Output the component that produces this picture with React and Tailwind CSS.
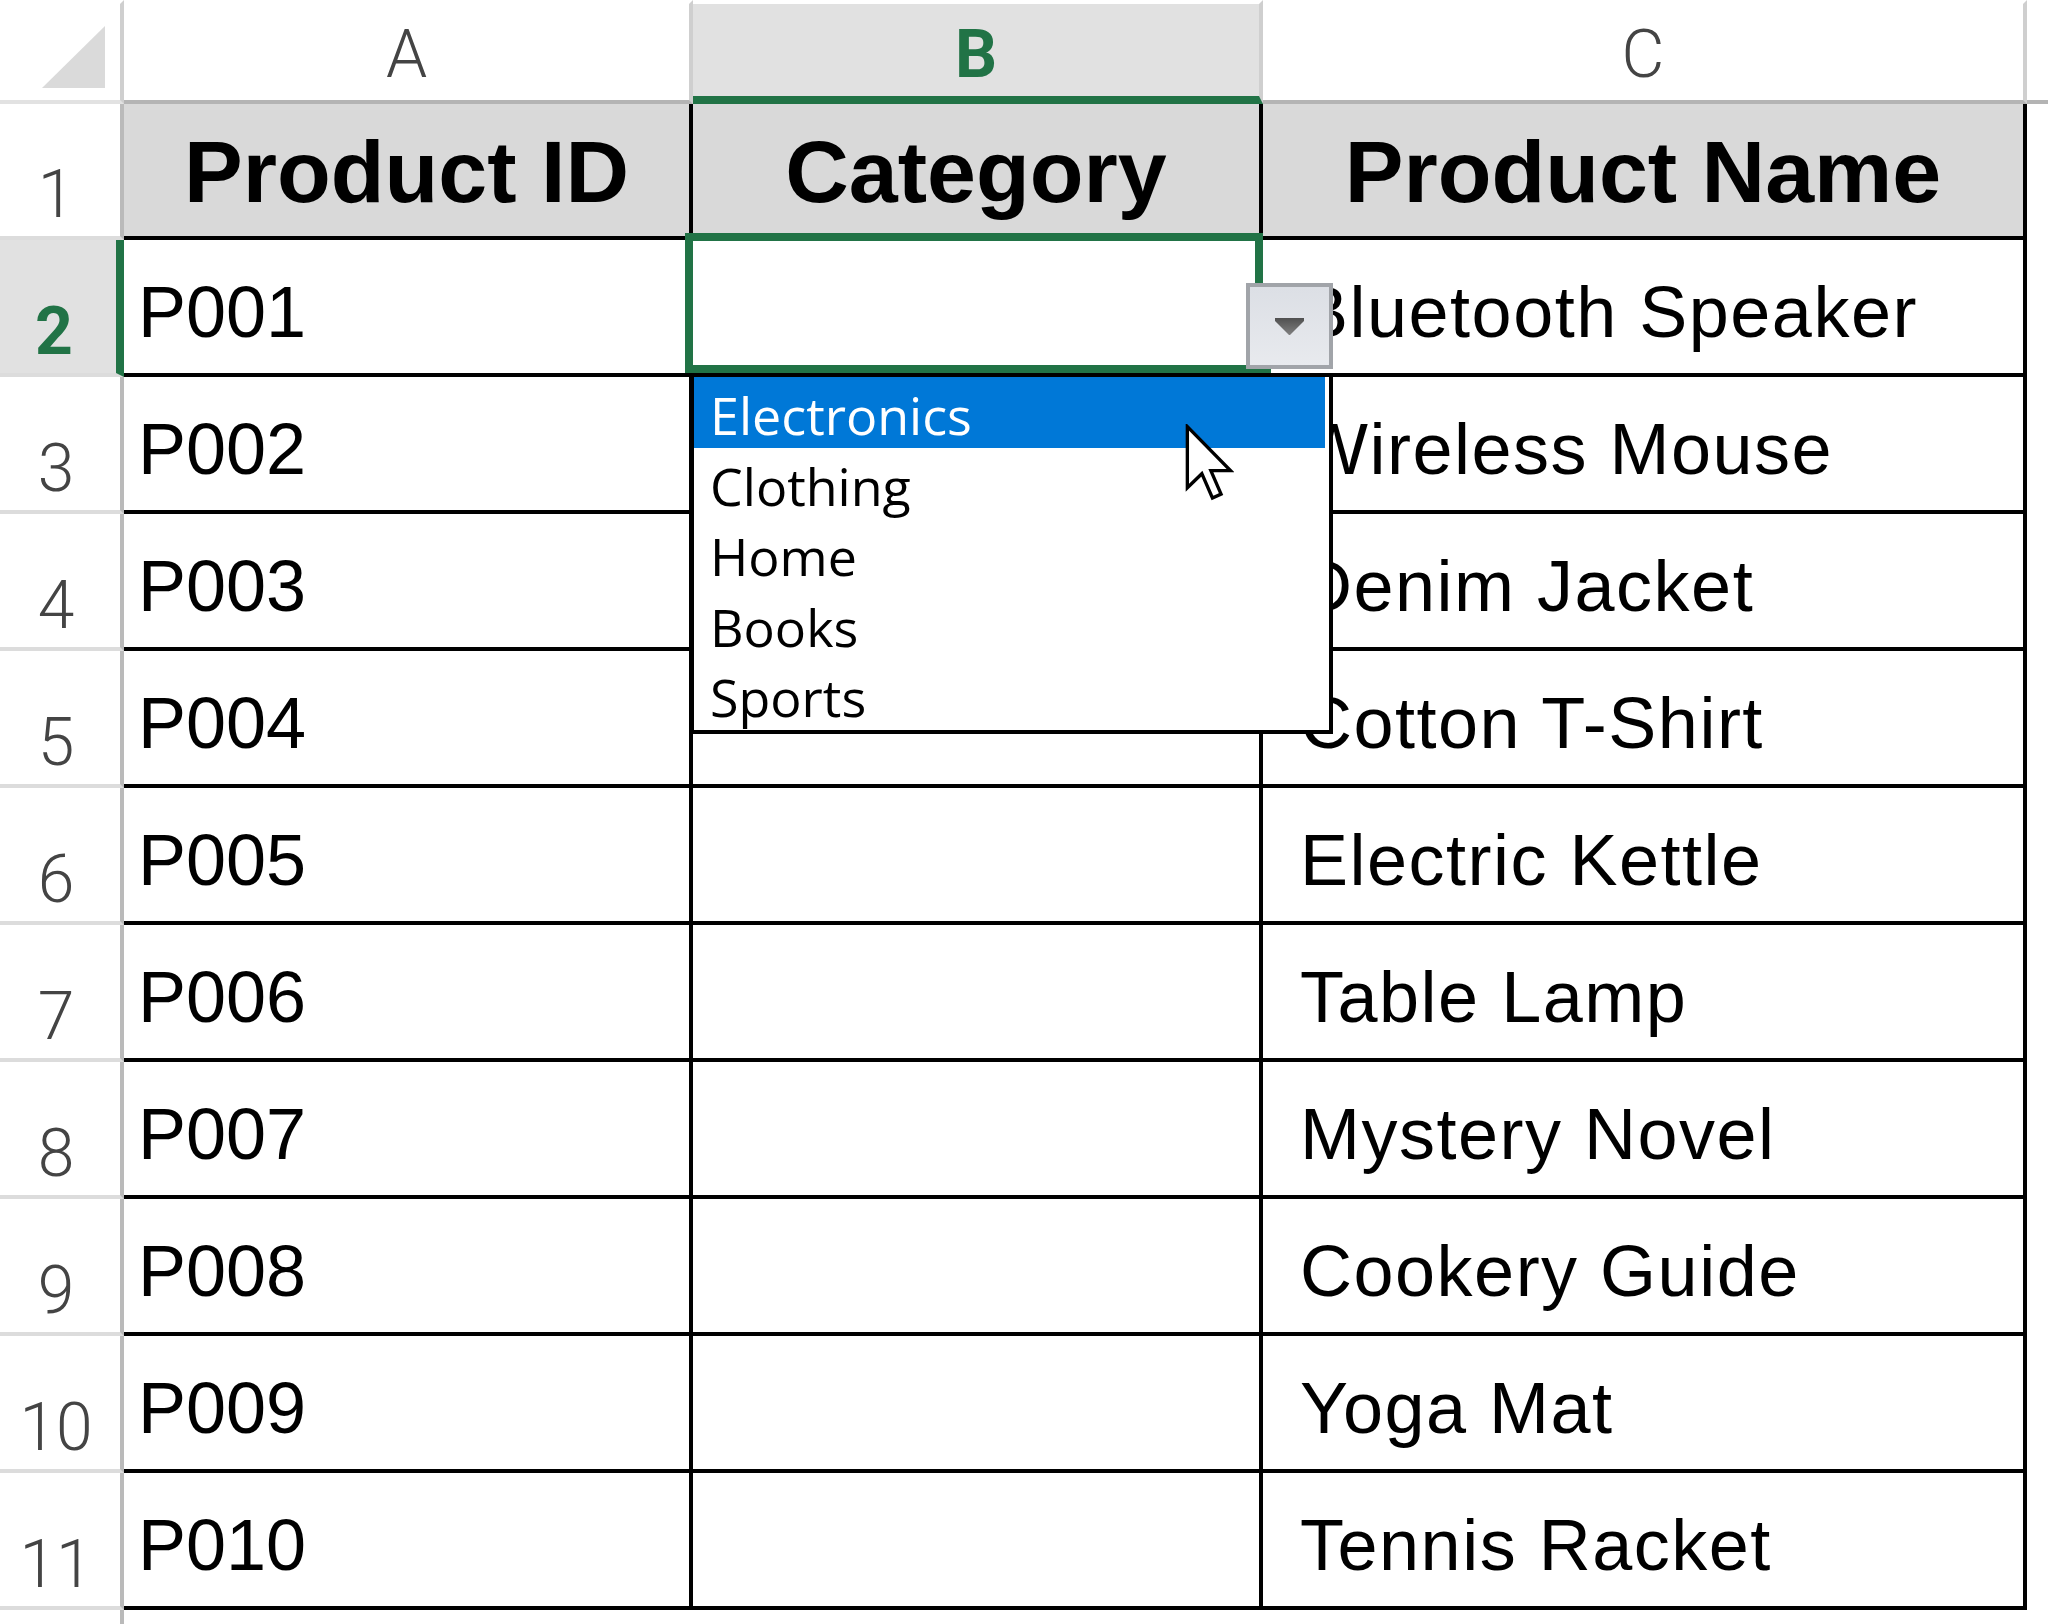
import React from 'react';

const ROWS = [
  ['P001', 'Bluetooth Speaker'],
  ['P002', 'Wireless Mouse'],
  ['P003', 'Denim Jacket'],
  ['P004', 'Cotton T-Shirt'],
  ['P005', 'Electric Kettle'],
  ['P006', 'Table Lamp'],
  ['P007', 'Mystery Novel'],
  ['P008', 'Cookery Guide'],
  ['P009', 'Yoga Mat'],
  ['P010', 'Tennis Racket'],
];

const OPTIONS = ['Electronics', 'Clothing', 'Home', 'Books', 'Sports'];

const headFont = "font-['Roboto',sans-serif]";
const cellFont = "font-['Liberation_Sans',Arial,sans-serif]";

function RowHead({ n, selected }) {
  return (
    <div
      className={`flex items-end justify-center pb-[8px] pr-[8px] border-b-4 border-b-[#dcdcdc] text-[66px] leading-none ${headFont} ${
        selected
          ? 'bg-[#e1e1e1] border-r-8 border-r-[#217346] text-[#217346] font-bold'
          : 'bg-white border-r-4 border-r-[#bababa] text-[#444] font-light'
      }`}
    >
      {n}
    </div>
  );
}

function ColHead({ label, selected }) {
  return (
    <div
      className={`flex items-end justify-center border-t-4 border-t-white border-r-4 border-r-[#cfcfcf] text-[66px] leading-none ${headFont} ${
        selected
          ? 'bg-[#e1e1e1] pb-[8px] border-b-8 border-b-[#217346] text-[#217346] font-bold'
          : 'bg-white pb-[12px] border-b-4 border-b-[#b4b4b4] text-[#444] font-light'
      }`}
    >
      {label}
    </div>
  );
}

function Cursor() {
  return (
    <svg width="49" height="79" viewBox="0 0 12.5 20" className="block">
      <path
        d="M0.6 0.6 L0.6 16.2 L4.3 12.6 L7 18.8 L9.2 17.8 L6.6 11.8 L11.6 11.8 Z"
        fill="#fff"
        stroke="#000"
        strokeWidth="0.85"
      />
    </svg>
  );
}

function CategoryCell() {
  return (
    <div className="relative border-r-4 border-b-4 border-black bg-white">
      {/* selection frame and fill handle */}
      <div className="absolute -left-[8px] -top-[7px] -right-[4px] bottom-0 border-8 border-[#217346] z-10" />
      <div className="absolute left-[557px] top-[129px] w-[21px] h-[8px] bg-[#217346] z-10" />
      {/* dropdown button */}
      <div className="absolute left-[553px] top-[43px] w-[87px] h-[86px] border-4 border-[#a1a4a9] bg-gradient-to-b from-[#dcdfe5] to-[#e8eaee] flex items-center justify-center z-20">
        <svg width="29" height="17" viewBox="0 0 29 17">
          <defs>
            <linearGradient id="tri" x1="0" y1="0" x2="0" y2="1">
              <stop offset="0" stopColor="#505050" />
              <stop offset="1" stopColor="#808080" />
            </linearGradient>
          </defs>
          <polygon points="0,0 29,0 29,3 15,17 14,17 0,3" fill="url(#tri)" />
        </svg>
      </div>
      {/* list */}
      <div className="absolute -left-[3px] top-[133px] w-[643px] h-[361px] border-4 border-black bg-white pr-[4px] z-20 font-['Open_Sans',sans-serif]">
        {OPTIONS.map((o, i) => (
          <div
            key={o}
            className={`h-[70.6px] pl-[16px] pt-[5px] text-[52px] leading-[66px] ${
              i === 0 ? 'bg-[#0078d7] text-white' : 'text-black'
            }`}
          >
            {o}
          </div>
        ))}
      </div>
      <div className="absolute left-[492px] top-[184px] z-30">
        <Cursor />
      </div>
    </div>
  );
}

export default function App() {
  return (
    <div className="w-[2048px] h-[1624px] bg-white overflow-hidden">
      <div className="grid grid-cols-[124px_569px_570px_764px_21px] grid-rows-[104px_136px_repeat(10,137px)_14px]">
        {/* corner */}
        <div className="relative border-t-4 border-t-white border-r-4 border-r-[#cfcfcf] border-b-4 border-b-[#e2e2e2] bg-white">
          <svg width="64" height="62" viewBox="0 0 64 62" className="absolute left-[42px] top-[22px]">
            <polygon points="63,0 63,62 0,62" fill="#dadada" />
          </svg>
        </div>
        <ColHead label="A" />
        <ColHead label="B" selected />
        <ColHead label="C" />
        <div className="border-t-4 border-t-white border-b-4 border-b-[#b4b4b4] bg-white" />

        {/* row 1 */}
        <RowHead n={1} />
        {['Product ID', 'Category', 'Product Name'].map((h) => (
          <div
            key={h}
            className={`flex items-end justify-center pb-[20px] bg-[#d9d9d9] border-r-4 border-b-4 border-black text-[88px] leading-none font-bold text-black ${cellFont}`}
          >
            {h}
          </div>
        ))}
        <div />

        {ROWS.map(([id, name], i) => (
          <React.Fragment key={id}>
            <RowHead n={i + 2} selected={i === 0} />
            <div
              className={`flex items-end pl-[14px] pb-[25px] border-r-4 border-b-4 border-black text-[72px] leading-none text-black ${cellFont}`}
            >
              {id}
            </div>
            {i === 0 ? (
              <CategoryCell />
            ) : (
              <div className="border-r-4 border-b-4 border-black" />
            )}
            <div
              className={`flex items-end pl-[37px] pb-[25px] border-r-4 border-b-4 border-black text-[72px] leading-none tracking-[1.5px] text-black whitespace-nowrap ${cellFont}`}
            >
              {name}
            </div>
            <div />
          </React.Fragment>
        ))}

        {/* bottom strip */}
        <div className="border-r-4 border-r-[#bababa]" />
        <div />
        <div />
        <div />
        <div />
      </div>
    </div>
  );
}
